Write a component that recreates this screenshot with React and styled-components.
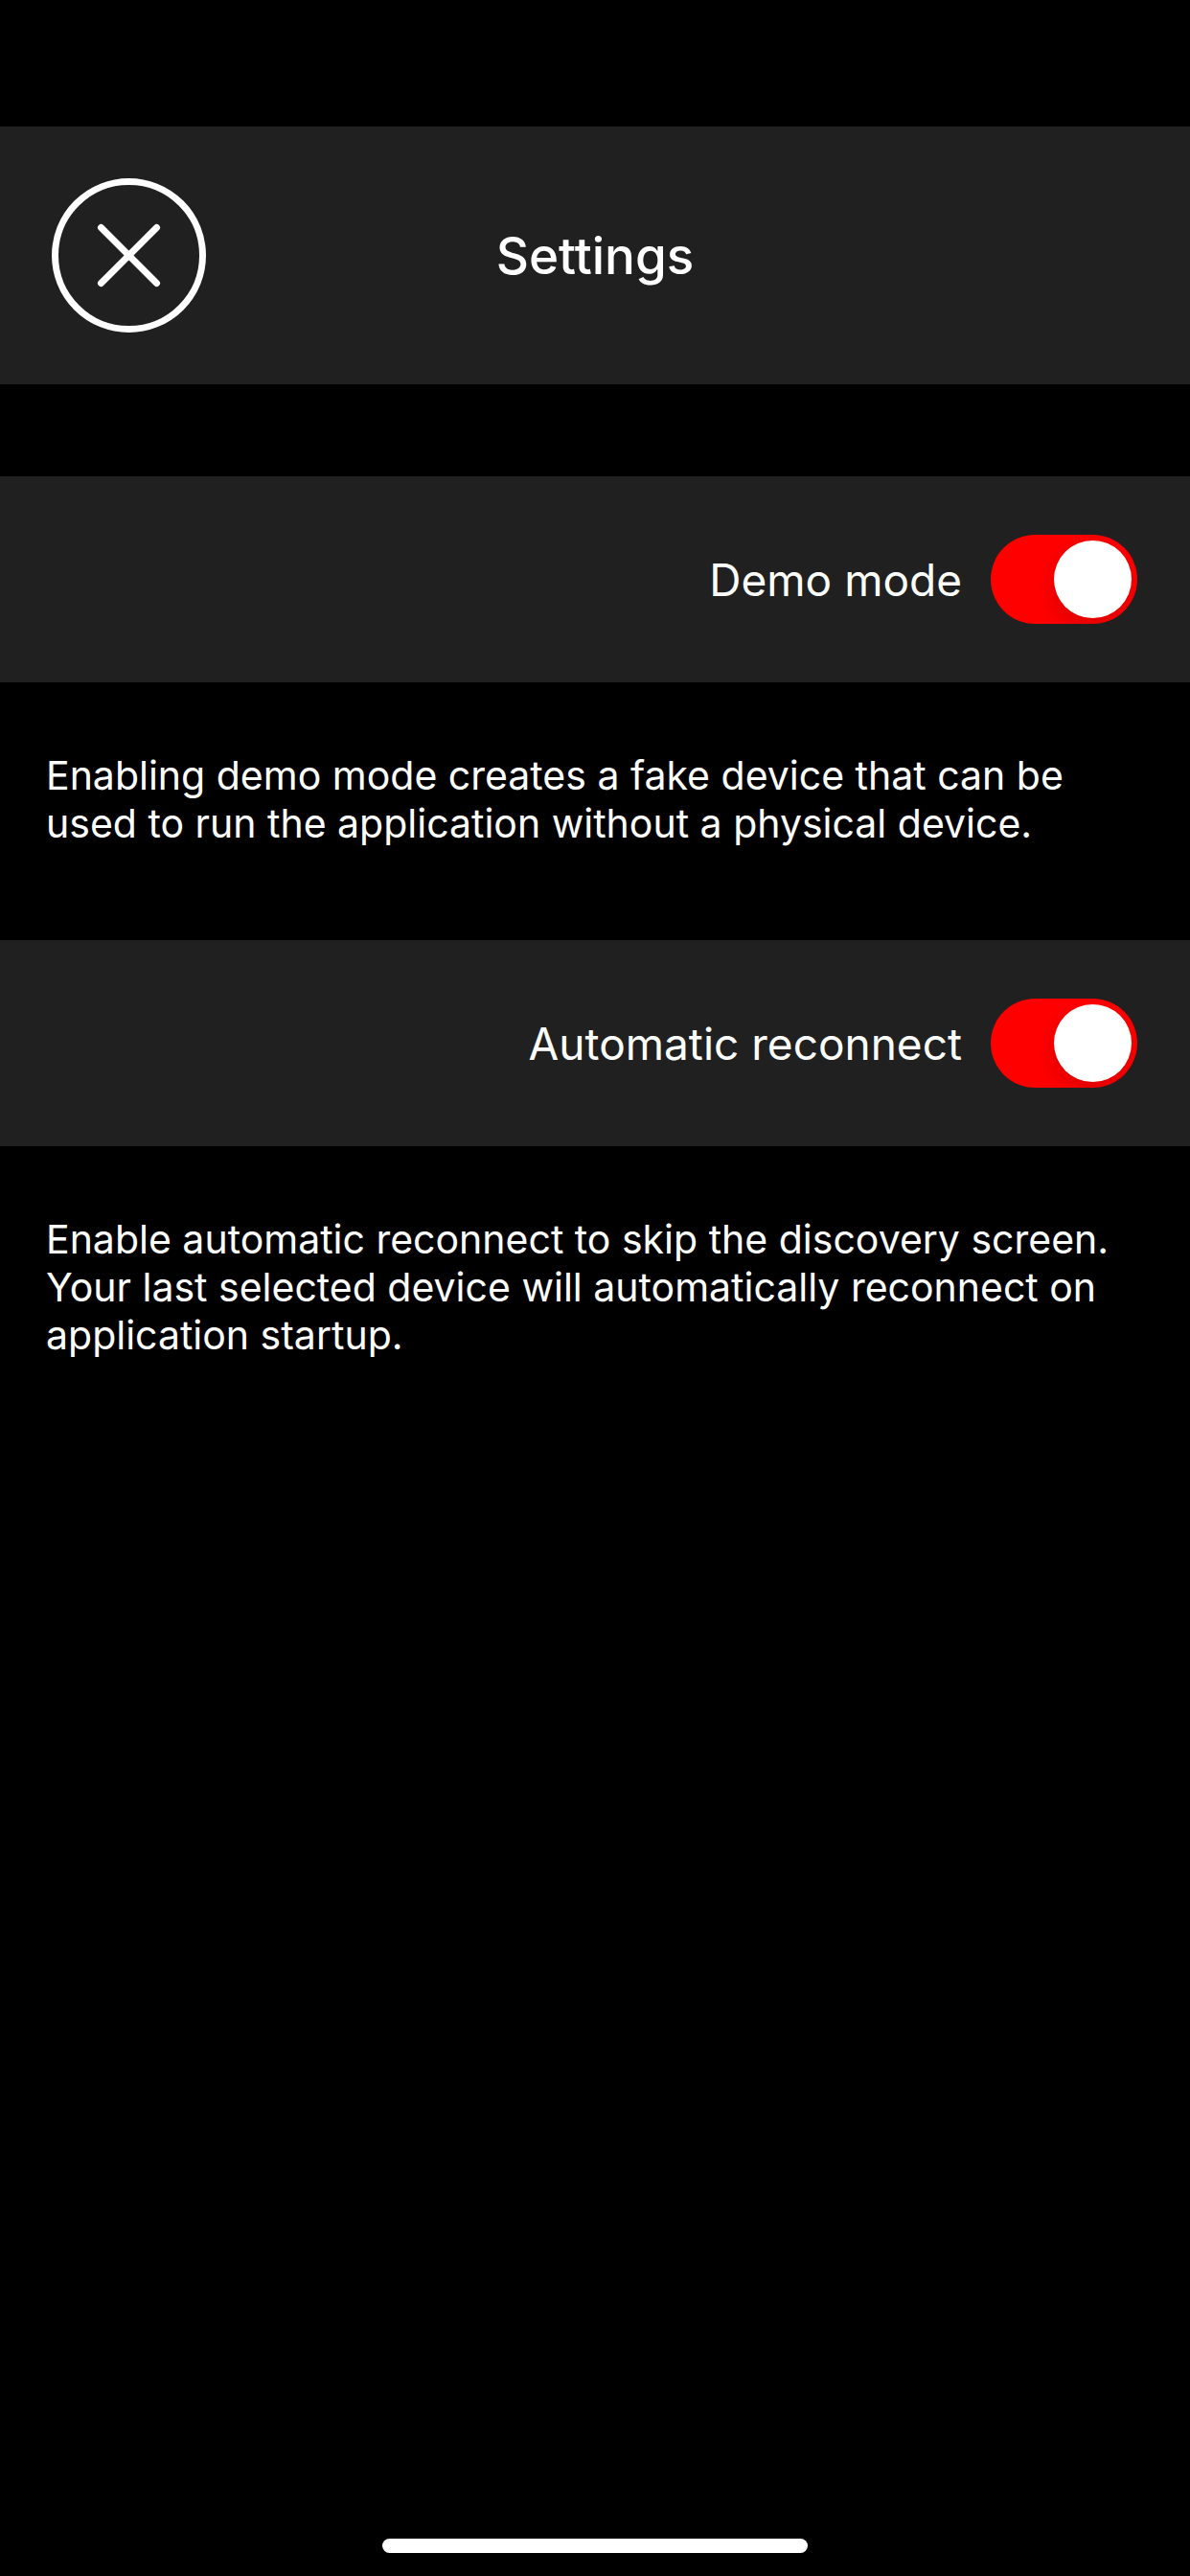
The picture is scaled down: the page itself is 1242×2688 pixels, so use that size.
import React, { useState } from "react";
import styled, { createGlobalStyle } from "styled-components";

const GlobalStyle = createGlobalStyle`
  * {
    box-sizing: border-box;
  }
  body {
    margin: 0;
    background: #000;
    color: #fff;
    font-family: Inter, "Liberation Sans", sans-serif;
  }
`;

const Screen = styled.div`
  display: flex;
  flex-direction: column;
  min-height: 100vh;
  padding-top: 132px;
`;

const Header = styled.header`
  display: grid;
  grid-template-columns: 1fr auto 1fr;
  align-items: center;
  padding: 54px;
  background: #202020;
`;

const Title = styled.h1`
  margin: 0;
  font-size: 53px;
  line-height: 60px;
  font-weight: 500;
`;

const CloseButton = styled.button`
  display: flex;
  width: 161px;
  height: 161px;
  padding: 0;
  border: none;
  border-radius: 50%;
  background: none;
  color: #fff;
  cursor: pointer;
`;

const Main = styled.main`
  flex: 1;
  padding-top: 96px;
`;

const Row = styled.label`
  display: flex;
  align-items: center;
  justify-content: flex-end;
  gap: 30px;
  padding: 61px 55px;
  background: #202020;
  font-size: 46px;
  line-height: 60px;
  cursor: pointer;
`;

const Switch = styled.input`
  appearance: none;
  display: flex;
  flex-shrink: 0;
  align-items: center;
  justify-content: ${(props) => (props.checked ? "flex-end" : "flex-start")};
  width: 153px;
  height: 93px;
  margin: 0;
  padding: 6px;
  border-radius: 47px;
  background: ${(props) => (props.checked ? "#f00" : "#39393d")};
  overflow: hidden;
  cursor: pointer;

  &::before {
    content: "";
    width: 81px;
    height: 81px;
    border-radius: 50%;
    background: #fff;
    box-shadow: 0 9px 24px rgba(0, 0, 0, 0.15);
  }
`;

const Description = styled.p`
  margin: 0;
  padding: 72px 48px 97px;
  font-size: 41px;
  line-height: 50px;
`;

const Footer = styled.footer`
  display: flex;
  justify-content: center;
  padding-bottom: 24px;
`;

const HomeIndicator = styled.div`
  width: 444px;
  height: 15px;
  border-radius: 8px;
  background: #fff;
`;

function CloseIcon() {
  return (
    <svg
      width="161"
      height="161"
      viewBox="0 0 161 161"
      fill="none"
      stroke="currentColor"
      strokeWidth="7"
      strokeLinecap="round"
      aria-hidden="true"
    >
      <circle cx="80.5" cy="80.5" r="77" />
      <path d="M51.5 51.5l58 58M109.5 51.5l-58 58" />
    </svg>
  );
}

function Setting({ id, label, children }) {
  const [enabled, setEnabled] = useState(true);

  return (
    <section>
      <Row htmlFor={id}>
        {label}
        <Switch
          id={id}
          type="checkbox"
          role="switch"
          checked={enabled}
          onChange={(e) => setEnabled(e.target.checked)}
        />
      </Row>
      <Description>{children}</Description>
    </section>
  );
}

function App() {
  return (
    <Screen>
      <GlobalStyle />
      <Header>
        <CloseButton type="button" aria-label="Close">
          <CloseIcon />
        </CloseButton>
        <Title>Settings</Title>
      </Header>
      <Main>
        <Setting id="demo-mode" label="Demo mode">
          Enabling demo mode creates a fake device that can be used to run the
          application without a physical device.
        </Setting>
        <Setting id="automatic-reconnect" label="Automatic reconnect">
          Enable automatic reconnect to skip the discovery screen. Your last
          selected device will automatically reconnect on application startup.
        </Setting>
      </Main>
      <Footer>
        <HomeIndicator />
      </Footer>
    </Screen>
  );
}

export default App;
